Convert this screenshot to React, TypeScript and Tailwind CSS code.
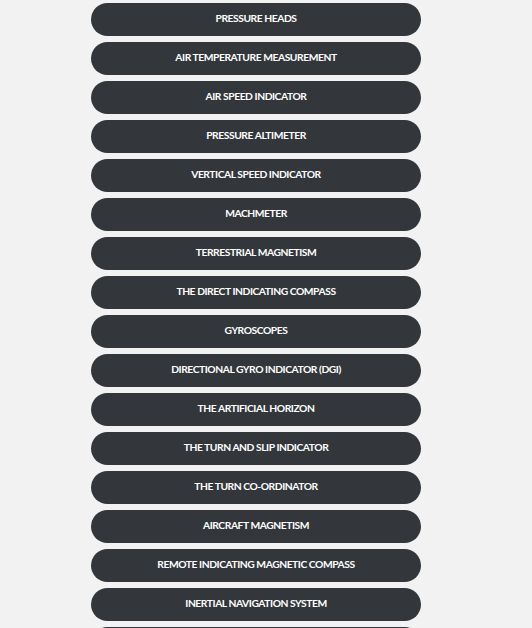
const items = [
  "PRESSURE HEADS",
  "AIR TEMPERATURE MEASUREMENT",
  "AIR SPEED INDICATOR",
  "PRESSURE ALTIMETER",
  "VERTICAL SPEED INDICATOR",
  "MACHMETER",
  "TERRESTRIAL MAGNETISM",
  "THE DIRECT INDICATING COMPASS",
  "GYROSCOPES",
  "DIRECTIONAL GYRO INDICATOR (DGI)",
  "THE ARTIFICIAL HORIZON",
  "THE TURN AND SLIP INDICATOR",
  "THE TURN CO-ORDINATOR",
  "AIRCRAFT MAGNETISM",
  "REMOTE INDICATING MAGNETIC COMPASS",
  "INERTIAL NAVIGATION SYSTEM",
  "FLIGHT MANAGEMENT SYSTEM",
];

export default function App() {
  return (
    <div className="min-h-screen bg-[#f2f2f2] pt-[3px]">
      <div className="ml-[91px] flex w-[330px] flex-col gap-[6px]">
        {items.map((t) => (
          <button
            key={t}
            className="flex h-[33px] w-full items-center justify-center rounded-full bg-[#33373b] pb-[2px] text-[10.3px] font-bold tracking-[-0.45px] text-white"
            style={{ fontFamily: "Lato, 'Open Sans', sans-serif" }}
          >
            {t}
          </button>
        ))}
      </div>
    </div>
  );
}
